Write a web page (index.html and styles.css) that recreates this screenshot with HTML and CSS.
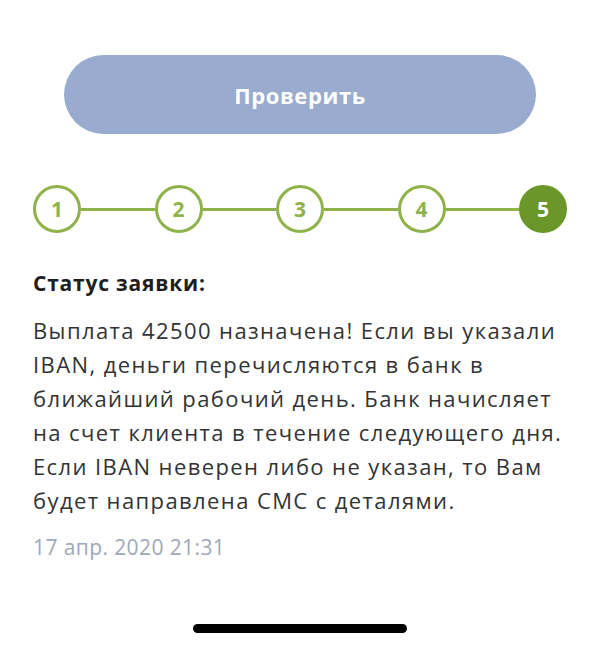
FILE: index.html
```html
<!DOCTYPE html>
<html lang="ru">
<head>
<meta charset="utf-8">
<link rel="stylesheet" href="styles.css">
</head>
<body>
<div class="screen">
  <div class="btn-wrap"><button class="check-btn">Проверить</button></div>
  <div class="stepper">
    <div class="step">1</div><div class="line"></div>
    <div class="step">2</div><div class="line"></div>
    <div class="step">3</div><div class="line"></div>
    <div class="step">4</div><div class="line"></div>
    <div class="step active">5</div>
  </div>
  <h2 class="status-title">Статус заявки:</h2>
  <p class="status-text">Выплата 42500 назначена! Если вы указали IBAN, деньги перечисляются в банк в ближайший рабочий день. Банк начисляет на счет клиента в течение следующего дня. Если IBAN неверен либо не указан, то Вам будет направлена СМС с деталями.</p>
  <div class="date">17 апр. 2020 21:31</div>
  <div class="home-wrap"><div class="home-bar"></div></div>
</div>
</body>
</html>
```
FILE: styles.css
```css
html, body { margin: 0; padding: 0; background: #fff; }
body { font-family: "Open Sans", "Noto Sans", sans-serif; color: #333; }
.screen { width: 600px; height: 646px; padding: 55px 33px 0; box-sizing: border-box; display: flex; flex-direction: column; }
.btn-wrap { padding: 0 31px; }
.check-btn { width: 100%; height: 79px; border: none; border-radius: 40px; background: #99acd0; color: #fff; font-family: inherit; font-weight: 700; font-size: 22px; letter-spacing: 0.6px; }
.stepper { display: flex; align-items: center; margin-top: 51px; }
.step { width: 48px; height: 48px; box-sizing: border-box; border: 3px solid #8fb34a; border-radius: 50%; display: flex; align-items: center; justify-content: center; font-weight: 700; font-size: 21px; color: #8fb34a; flex: none; }
.step.active { background: #6b972a; border-color: #6b972a; color: #fff; }
.line { flex: 1; height: 3px; background: #8fb34a; }
.status-title { margin: 36px 0 0; font-size: 21px; font-weight: 700; line-height: 28px; color: #1e1e1e; letter-spacing: 0.8px; }
.status-text { margin: 16px 0 0; font-size: 22px; line-height: 34px; color: #333; letter-spacing: 1.4px; }
.date { margin-top: 15px; font-size: 21px; line-height: 30px; color: #a0a8b8; letter-spacing: 0.4px; }
.home-wrap { margin-top: auto; padding-bottom: 13px; display: flex; justify-content: center; }
.home-bar { width: 214px; height: 9px; border-radius: 5px; background: #000; }
```
